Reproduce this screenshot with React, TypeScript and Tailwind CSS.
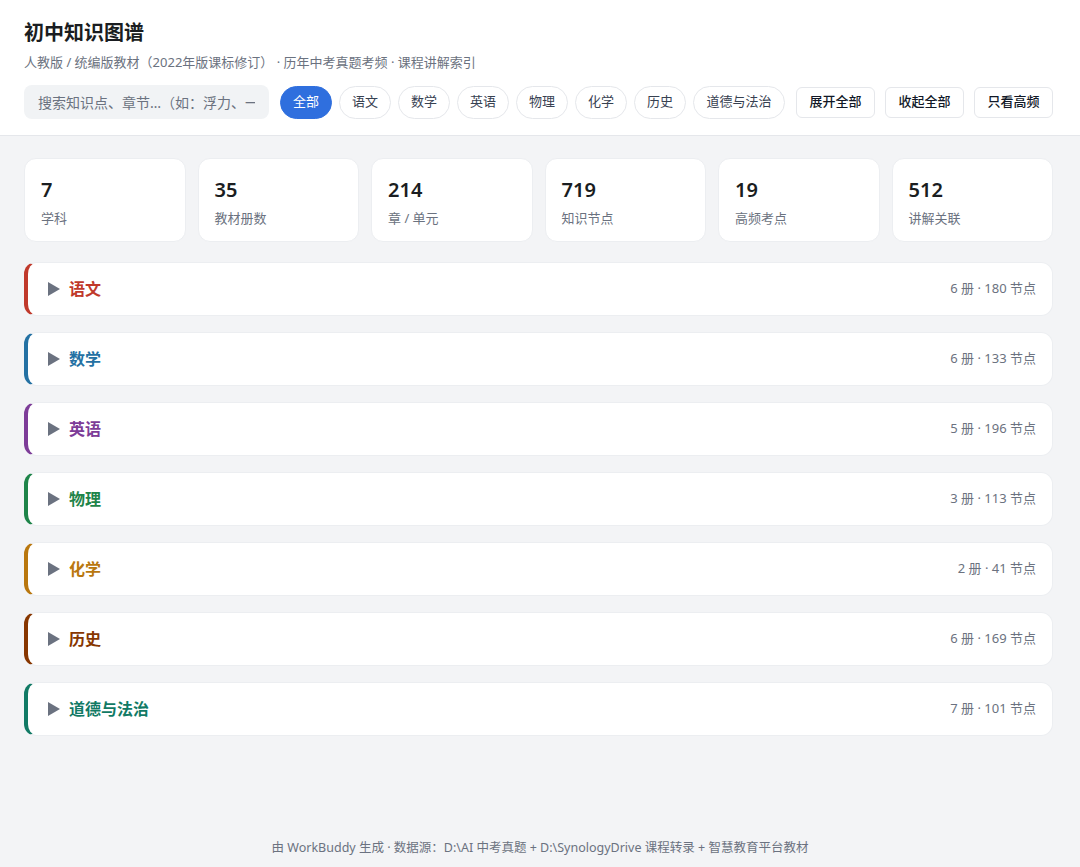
import React from "react"

const subjects = [
  { name: "语文", color: "text-[#c0392b]", bar: "border-l-[#c0392b]", meta: "6 册 · 180 节点" },
  { name: "数学", color: "text-[#2471a3]", bar: "border-l-[#2471a3]", meta: "6 册 · 133 节点" },
  { name: "英语", color: "text-[#7d3c98]", bar: "border-l-[#7d3c98]", meta: "5 册 · 196 节点" },
  { name: "物理", color: "text-[#1e8449]", bar: "border-l-[#1e8449]", meta: "3 册 · 113 节点" },
  { name: "化学", color: "text-[#b9770e]", bar: "border-l-[#b9770e]", meta: "2 册 · 41 节点" },
  { name: "历史", color: "text-[#873600]", bar: "border-l-[#873600]", meta: "6 册 · 169 节点" },
  { name: "道德与法治", color: "text-[#117a65]", bar: "border-l-[#117a65]", meta: "7 册 · 101 节点" },
]

const stats = [
  { n: "7", label: "学科" },
  { n: "35", label: "教材册数" },
  { n: "214", label: "章 / 单元" },
  { n: "719", label: "知识节点" },
  { n: "19", label: "高频考点" },
  { n: "512", label: "讲解关联" },
]

const pills = ["全部", "语文", "数学", "英语", "物理", "化学", "历史", "道德与法治"]
const actions = ["展开全部", "收起全部", "只看高频"]

export default function App() {
  return (
    <div
      className="min-h-[867px] flex flex-col bg-[#f3f4f6] text-[#1f2328]"
      style={{ fontFamily: '"Noto Sans", "Noto Sans CJK SC", sans-serif' }}
    >
      {/* Header */}
      <header className="bg-white border-b border-[#e5e7eb] pl-6 pr-[27px] pt-[17px] pb-[16px]">
        <h1 className="text-[20px] font-bold leading-[32px] text-[#1a1d21]">初中知识图谱</h1>
        <p className="text-[13px] text-[#6b7280] leading-[20px] mt-[3px]">
          人教版 / 统编版教材（2022年版课标修订） · 历年中考真题考频 · 课程讲解索引
        </p>
        <div className="flex items-center mt-[13px]">
          <input
            className="w-[245px] shrink-0 h-[34px] rounded-lg bg-[#f1f3f5] px-[14px] text-[14px] text-[#374151] placeholder:text-[#6b7280] outline-none"
            placeholder="搜索知识点、章节…（如：浮力、一元二次方程）"
          />
          <div className="flex items-center gap-[7px] ml-[11px] shrink-0">
            {pills.map((p, i) => (
              <button
                key={p}
                className={
                  (p.length > 2 ? "w-[92px] " : "w-[52px] ") +
                  (i === 0
                    ? "h-[33px] shrink-0 whitespace-nowrap rounded-full bg-[#2f6fde] border border-[#2f6fde] text-white text-[13px]"
                    : "h-[33px] shrink-0 whitespace-nowrap rounded-full bg-white border border-[#e5e7eb] text-[#374151] text-[13px]")
                }
              >
                {p}
              </button>
            ))}
          </div>
          <div className="flex items-center gap-[10px] ml-auto">
            {actions.map((a) => (
              <button
                key={a}
                className="h-[31px] w-[79px] shrink-0 whitespace-nowrap rounded-md bg-white border border-[#e5e7eb] text-[13px] font-medium text-[#111827]"
              >
                {a}
              </button>
            ))}
          </div>
        </div>
      </header>

      {/* Stats */}
      <main className="pl-6 pr-[27px] pt-[22px]">
        <div className="grid grid-cols-6 gap-3">
          {stats.map((s) => (
            <div key={s.label} className="h-[84px] bg-white border border-[#eceef1] rounded-xl px-4 pt-[18px]">
              <div className="text-[20px] font-semibold leading-[26px] text-[#1a1d21]">{s.n}</div>
              <div className="text-[13px] text-[#6b7280] leading-[18px] mt-[6px]">{s.label}</div>
            </div>
          ))}
        </div>

        {/* Subjects */}
        <div className="flex flex-col gap-4 mt-5">
          {subjects.map((s) => (
            <div
              key={s.name}
              className={`h-[54px] flex items-center bg-white border border-[#eceef1] border-l-4 ${s.bar} rounded-xl pl-5 pr-4`}
            >
              <svg width="12" height="14" viewBox="0 0 12 14" className="shrink-0">
                <polygon points="0,0 12,7 0,14" fill="#6b7280" />
              </svg>
              <span className={`ml-[9px] text-[16px] font-bold ${s.color}`}>{s.name}</span>
              <span className="ml-auto text-[13px] text-[#6b7280]">{s.meta}</span>
            </div>
          ))}
        </div>
      </main>

      <footer className="mt-auto pb-[9px] text-center text-[12.5px] text-[#6b7280]">
        由 WorkBuddy 生成 · 数据源：D:\AI 中考真题 + D:\SynologyDrive 课程转录 + 智慧教育平台教材
      </footer>
    </div>
  )
}
